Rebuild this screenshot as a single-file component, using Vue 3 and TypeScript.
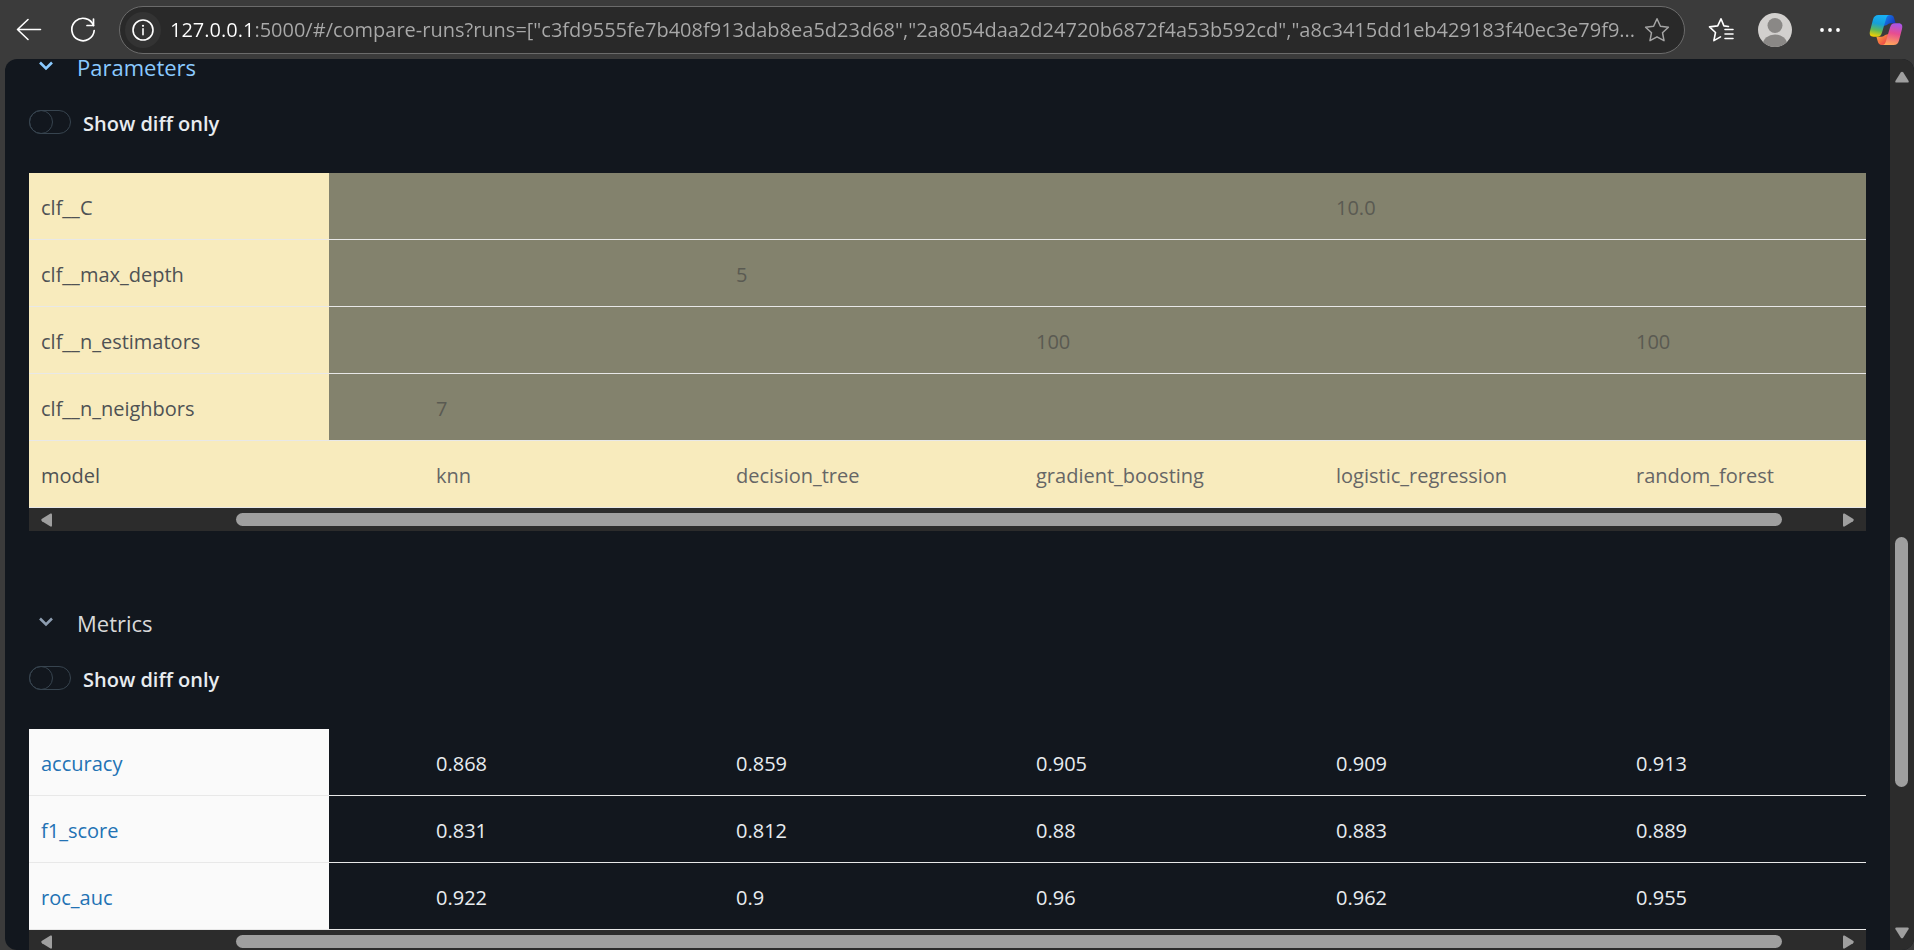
<script setup lang="ts">
import { ref } from 'vue'

interface Row {
  name: string
  values: string[]
  missing?: boolean
}

interface Section {
  id: string
  title: string
  active: boolean
  kind: 'params' | 'metrics'
  rows: Row[]
}

const url = ref(
  '127.0.0.1:5000/#/compare-runs?runs=["c3fd9555fe7b408f913dab8ea5d23d68","2a8054daa2d24720b6872f4a53b592cd","a8c3415dd1eb429183f40ec3e79f9...'
)

const diffOnly = ref<Record<string, boolean>>({ parameters: false, metrics: false })

const sections: Section[] = [
  {
    id: 'parameters',
    title: 'Parameters',
    active: true,
    kind: 'params',
    rows: [
      { name: 'clf__C', values: ['', '', '', '10.0', ''], missing: true },
      { name: 'clf__max_depth', values: ['', '5', '', '', ''], missing: true },
      { name: 'clf__n_estimators', values: ['', '', '100', '', '100'], missing: true },
      { name: 'clf__n_neighbors', values: ['7', '', '', '', ''], missing: true },
      {
        name: 'model',
        values: ['knn', 'decision_tree', 'gradient_boosting', 'logistic_regression', 'random_forest'],
      },
    ],
  },
  {
    id: 'metrics',
    title: 'Metrics',
    active: false,
    kind: 'metrics',
    rows: [
      { name: 'accuracy', values: ['0.868', '0.859', '0.905', '0.909', '0.913'] },
      { name: 'f1_score', values: ['0.831', '0.812', '0.88', '0.883', '0.889'] },
      { name: 'roc_auc', values: ['0.922', '0.9', '0.96', '0.962', '0.955'] },
    ],
  },
]
</script>

<template>
  <div class="browser">
    <header class="toolbar">
      <button class="tool" type="button" aria-label="Back">
        <svg width="26" height="26" viewBox="0 0 26 26" fill="none" stroke="#fff" stroke-width="1.6" stroke-linecap="round" stroke-linejoin="round">
          <path d="M24.5 12.500H1.500M12 2.500L1.500 12.500l10.500 10" />
        </svg>
      </button>
      <button class="tool refresh" type="button" aria-label="Refresh">
        <svg width="26" height="26" viewBox="0 0 26 26" fill="none" stroke="#fff" stroke-width="1.700" stroke-linecap="round" stroke-linejoin="round">
          <path d="M23.500 8.500A11.200 11.200 0 1 0 24.200 13.500" />
          <path d="M23.500 2v6.500H17" />
        </svg>
      </button>
      <div class="address">
        <button class="info" type="button" aria-label="View site information">
          <svg width="22" height="22" viewBox="0 0 22 22" fill="none" stroke="#fff" stroke-width="1.600">
            <circle cx="11" cy="11" r="10" />
            <path d="M11 9.800v6" stroke-linecap="round" />
            <circle cx="11" cy="6.800" r="1.100" fill="#fff" stroke="none" />
          </svg>
        </button>
        <input v-model="url" class="url" type="text" aria-label="Address" spellcheck="false" />
        <button class="star" type="button" aria-label="Add to favorites">
          <svg width="26" height="26" viewBox="0 0 26 26" fill="none" stroke="#a5a5a5" stroke-width="1.500" stroke-linejoin="round">
            <path d="M13 1.800l3.400 7.400 8 1-5.900 5.500 1.500 8L13 19.800l-7 3.900 1.500-8L1.600 10.200l8-1z" />
          </svg>
        </button>
      </div>
      <button class="tool favorites" type="button" aria-label="Favorites">
        <svg width="26" height="26" viewBox="0 0 26 26" fill="none" stroke="#fff" stroke-width="1.600" stroke-linecap="round" stroke-linejoin="round">
          <path d="M20.500 9.500l-4.600-.6L13 1.800 9.700 8.900l-8.200 1 6 5.600-1.600 8.100 6.600-3.700" />
          <path d="M17 12.500h8M17 17h8M17 21.500h8" />
        </svg>
      </button>
      <button class="tool profile" type="button" aria-label="Profile">
        <svg width="34" height="34" viewBox="0 0 34 34">
          <defs><clipPath id="face"><circle cx="17" cy="17" r="17" /></clipPath></defs>
          <g clip-path="url(#face)">
            <rect width="34" height="34" fill="#d2d0ce" />
            <circle cx="17" cy="12.500" r="7.500" fill="#8a8886" />
            <ellipse cx="17" cy="31" rx="12" ry="9.500" fill="#8a8886" />
          </g>
        </svg>
      </button>
      <button class="tool more" type="button" aria-label="Settings and more">
        <svg width="20" height="6" viewBox="0 0 20 6" fill="#fff">
          <circle cx="2" cy="3" r="1.900" /><circle cx="10" cy="3" r="1.900" /><circle cx="18" cy="3" r="1.900" />
        </svg>
      </button>
      <button class="tool copilot" type="button" aria-label="Copilot">
        <svg width="34" height="32" viewBox="0 0 34 32">
          <defs>
            <linearGradient id="cpLeft" x1="0.500" y1="0" x2="0.300" y2="1">
              <stop offset="0" stop-color="#18b0f5" /><stop offset="0.400" stop-color="#169fd8" />
              <stop offset="0.700" stop-color="#5fb85a" /><stop offset="1" stop-color="#f5d000" />
            </linearGradient>
            <linearGradient id="cpRight" x1="0.600" y1="0" x2="0.400" y2="1">
              <stop offset="0" stop-color="#a855e8" /><stop offset="0.450" stop-color="#e84d90" />
              <stop offset="1" stop-color="#ffa85a" />
            </linearGradient>
            <linearGradient id="cpTop" x1="0" y1="0" x2="1" y2="0.600">
              <stop offset="0" stop-color="#168cf0" /><stop offset="1" stop-color="#1736bd" />
            </linearGradient>
            <linearGradient id="cpBottom" x1="0" y1="0" x2="1" y2="1">
              <stop offset="0" stop-color="#ffb13a" /><stop offset="1" stop-color="#e8304c" />
            </linearGradient>
          </defs>
          <path d="M15 1h6c2.600 0 3.500 1 4.200 3.400L26.600 9.300H23.500C21 9.300 19.500 9.500 18 11L14.500 12z" fill="url(#cpTop)" />
          <path d="M19 31h-6c-2.600 0-3.500-1-4.200-3.400L7.400 22.700H10.500C13 22.700 14.500 22.500 16 21L19.500 20z" fill="url(#cpBottom)" />
          <path d="M9.500 1H21c-2.300 0-3.200 1.500-4 4l-4 13.500C12 21.500 11 22.700 8 22.700H4.500C1 22.700.2 20.500 1 17L4 5.500C4.800 2.500 6.500 1 9.500 1z" fill="url(#cpLeft)" />
          <path d="M24.500 31H13c2.300 0 3.200-1.500 4-4l4-13.500C22 10.500 23 9.300 26 9.300h3.500c3.500 0 4.300 2.200 3.500 5.700l-3 11.500c-.8 3-2.500 4.500-5.500 4.500z" fill="url(#cpRight)" />
        </svg>
      </button>
    </header>

    <div class="window">
      <main class="page">
        <section v-for="s in sections" :key="s.id" class="section">
          <button class="heading" :class="{ active: s.active }" type="button" aria-expanded="true">
            <svg width="16" height="12" viewBox="0 0 16 12" fill="none" stroke="currentColor" stroke-width="2.600">
              <path d="M2 1.500l6 6 6-6" />
            </svg>
            <span>{{ s.title }}</span>
          </button>
          <label class="diff" :for="`diff-${s.id}`">
            <input :id="`diff-${s.id}`" v-model="diffOnly[s.id]" class="switch" type="checkbox" />
            <span>Show diff only</span>
          </label>
          <div class="scroller">
            <table :class="s.kind">
              <colgroup>
                <col class="name-col" />
                <col class="gap-col" />
                <col v-for="n in 4" :key="n" class="run-col" />
                <col />
              </colgroup>
              <tbody>
                <tr v-for="row in s.rows" :key="row.name" :class="{ missing: row.missing }">
                  <th scope="row">
                    <a v-if="s.kind === 'metrics'" :href="`#/metric/${row.name}`">{{ row.name }}</a>
                    <template v-else>{{ row.name }}</template>
                  </th>
                  <td></td>
                  <td v-for="(v, i) in row.values" :key="i"><span>{{ v }}</span></td>
                </tr>
              </tbody>
            </table>
            <div class="hbar" aria-hidden="true">
              <svg width="12" height="14" viewBox="0 0 12 14" fill="#9f9f9f"><path d="M11 1.500v11q0 1.500-1.500 1L1 8.200Q-.5 7 1 5.800L9.500.500Q11 0 11 1.500z" /></svg>
              <div class="track"><div class="thumb"></div></div>
              <svg width="12" height="14" viewBox="0 0 12 14" fill="#9f9f9f"><path d="M1 1.500v11q0 1.500 1.500 1L11 8.200q1.500-1.200 0-2.400L2.500.500Q1 0 1 1.500z" /></svg>
            </div>
          </div>
        </section>
      </main>
      <div class="vbar" aria-hidden="true">
        <svg width="14" height="12" viewBox="0 0 14 12" fill="#9f9f9f"><path d="M1.500 11.500h11q1.800 0 1-1.800L8.300 1.500Q7-.2 5.700 1.500L.500 9.700q-.8 1.800 1 1.800z" /></svg>
        <div class="vtrack"><div class="vthumb"></div></div>
        <svg width="14" height="12" viewBox="0 0 14 12" fill="#9f9f9f"><path d="M1.500.500h11q1.800 0 1 1.800L8.300 10.500Q7 12.200 5.700 10.500L.500 2.300q-.8-1.800 1-1.800z" /></svg>
      </div>
    </div>
  </div>
</template>

<style>
body {
  margin: 0;
  background: #3b3b3b;
}
</style>

<style scoped>
.browser {
  display: flex;
  flex-direction: column;
  height: 100vh;
  overflow: hidden;
  background: #3b3b3b;
  font-family: "Segoe UI", "Open Sans", "Noto Sans", sans-serif;
  font-size: 20px;
}
button {
  margin: 0;
  padding: 0;
  border: 0;
  background: none;
  font: inherit;
  cursor: pointer;
}
svg {
  display: block;
  flex: none;
}
.toolbar {
  display: flex;
  align-items: center;
  height: 59px;
  flex: none;
  box-sizing: border-box;
  padding: 0 11px 0 16px;
}
.tool {
  flex: none;
}
.refresh {
  margin-left: 28px;
}
.address {
  display: flex;
  align-items: center;
  flex: 1;
  min-width: 0;
  height: 48px;
  box-sizing: border-box;
  margin-left: 23px;
  padding: 0 14px 0 5px;
  border: 1px solid #6b6b6b;
  border-radius: 24px;
  background: #292929;
}
.info {
  display: grid;
  place-items: center;
  width: 36px;
  height: 36px;
  flex: none;
  border-radius: 50%;
  background: #333;
}
.url {
  flex: 1;
  min-width: 0;
  height: 40px;
  margin: 0 8px 0 9px;
  padding: 0;
  border: 0;
  outline: 0;
  font: inherit;
  color: transparent;
  background: linear-gradient(to right, #fff 84px, #a9a9a9 84px);
  -webkit-background-clip: text;
  background-clip: text;
}
.favorites {
  margin-left: 23px;
}
.profile {
  margin-left: 24px;
}
.more {
  margin-left: 28px;
}
.copilot {
  margin-left: 29px;
}
.window {
  display: flex;
  flex: 1;
  min-height: 0;
  margin-left: 5px;
  overflow: hidden;
  border-radius: 12px;
  background: #12171e;
}
.page {
  flex: 1;
  min-width: 0;
  overflow: hidden;
  padding: 0 24px;
}
.section {
  margin-bottom: 68px;
}
.section:first-child {
  margin-top: -16px;
}
.heading {
  display: flex;
  align-items: center;
  gap: 23px;
  height: 48px;
  padding-left: 9px;
  font-size: 22px;
  color: #8d9db0;
}
.heading span {
  color: #d9d9d9;
}
.heading.active,
.heading.active span {
  color: #8acaff;
}
.diff {
  display: flex;
  align-items: center;
  gap: 12px;
  width: fit-content;
  height: 62px;
  margin-bottom: 20px;
  font-weight: 600;
  color: #e8ecf0;
}
.diff span {
  padding-top: 2px;
}
.switch {
  appearance: none;
  width: 42px;
  height: 24px;
  margin: 0;
  border: 1px solid #37444f;
  border-radius: 12px;
  box-sizing: border-box;
}
.switch::before {
  content: "";
  display: block;
  width: 22px;
  height: 22px;
  margin: -1px;
  border: 1px solid #37444f;
  border-radius: 50%;
}
.switch:checked::before {
  margin-left: 17px;
}
.scroller {
  overflow: hidden;
}
table {
  width: 100%;
  table-layout: fixed;
  border-collapse: separate;
  border-spacing: 0;
}
.name-col {
  width: 300px;
}
.gap-col {
  width: 95px;
}
.run-col {
  width: 300px;
}
th,
td {
  height: 64px;
  padding: 2px 12px 0;
  border-bottom: 1px solid #e8e8e8;
  text-align: left;
  white-space: nowrap;
  color: #e8ecf0;
}
th {
  font-weight: 500;
}
.params th {
  background: #f8ebbd;
  color: #4f5254;
}
.params td {
  background: #f8ebbd;
  color: #666;
}
.params .missing td {
  background: #83826d;
  color: #5a5a52;
}
.metrics th {
  background: #fafafa;
}
.metrics a {
  color: #2272b4;
  text-decoration: none;
}
.hbar {
  display: flex;
  align-items: center;
  height: 23px;
  padding: 0 12px;
  background: #2c2c2c;
}
.track {
  flex: 1;
  padding: 0 60px 0 183px;
}
.thumb {
  height: 13px;
  border-radius: 7px;
  background: #9f9f9f;
}
.vbar {
  display: flex;
  flex-direction: column;
  align-items: center;
  width: 24px;
  flex: none;
  box-sizing: border-box;
  padding: 12px 1px 11px 0;
  background: #2c2c2c;
}
.vtrack {
  display: grid;
  grid-template-rows: 454fr 250fr 140fr;
  flex: 1;
  width: 13px;
}
.vthumb {
  grid-row: 2;
  border-radius: 7px;
  background: #9f9f9f;
}
</style>
